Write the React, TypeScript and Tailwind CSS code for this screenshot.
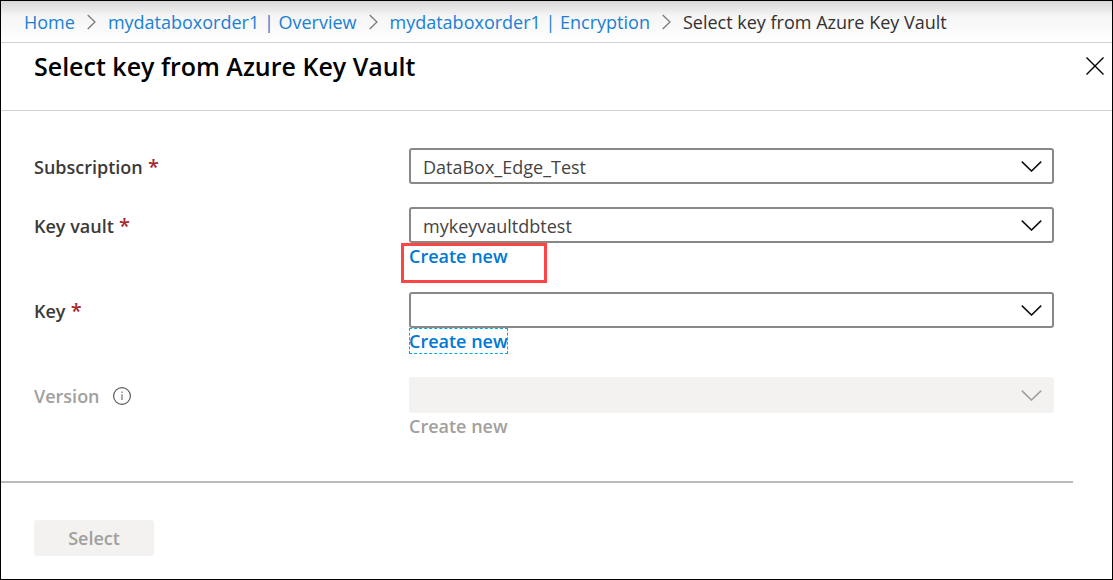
import { Fragment, type ReactNode } from "react";

const crumbs = ["Home", "mydataboxorder1 | Overview", "mydataboxorder1 | Encryption"];

function CrumbSeparator() {
  return (
    <svg className="mx-3 h-4 w-[9px] shrink-0" viewBox="0 0 9 16" fill="none" stroke="#767676" strokeWidth="1.2" aria-hidden="true">
      <path d="M0.7 1 L8 8 L0.7 15" />
    </svg>
  );
}

function Required() {
  return <span className="text-xl leading-none text-[#a4262c]"> *</span>;
}

function InfoIcon() {
  return (
    <svg className="h-5 w-5" viewBox="0 0 20 20" fill="none" aria-hidden="true">
      <circle cx="10" cy="10" r="8.4" stroke="#605e5c" strokeWidth="1.2" />
      <path d="M10 8.3 V14" stroke="#8a8886" strokeWidth="1.4" />
      <path d="M10 5.6 V7" stroke="#8a8886" strokeWidth="1.4" />
    </svg>
  );
}

type FieldProps = {
  id: string;
  label: ReactNode;
  value?: string;
  disabled?: boolean;
  children?: ReactNode;
};

function Field({ id, label, value = "", disabled = false, children }: FieldProps) {
  return (
    <div className="flex">
      <div className={`flex h-9 w-[375px] shrink-0 items-center pt-px ${disabled ? "text-[#a19f9d]" : "text-[#3b3a39]"}`}>
        {label}
      </div>
      <div className="min-w-0 flex-1">
        <div className="grid items-center">
          <select
            id={id}
            disabled={disabled}
            defaultValue={value}
            className="col-start-1 row-start-1 h-9 w-full appearance-none rounded-[3px] border-2 border-[#8a8886] bg-white pt-px pr-12 pl-3 text-lg font-normal text-[#454341] opacity-100 disabled:border-[#f3f2f1] disabled:bg-[#f3f2f1]"
          >
            <option value={value}>{value}</option>
          </select>
          <svg
            className={`pointer-events-none col-start-1 row-start-1 mr-3 h-3 w-[21px] justify-self-end ${disabled ? "text-[#a19f9d]" : "text-[#111111]"}`}
            viewBox="0 0 21 12"
            fill="none"
            stroke="currentColor"
            strokeWidth="1.6"
            aria-hidden="true"
          >
            <path d="M0.8 1.6 L10.5 11 L20.2 1.6" />
          </svg>
        </div>
        {children}
      </div>
    </div>
  );
}

export default function App() {
  return (
    <div className="min-h-screen border border-black bg-white font-['Open_Sans','Noto_Sans',sans-serif] text-lg font-semibold text-[#323130]">
      <nav
        aria-label="Breadcrumb"
        className="flex h-[42px] items-center border-b border-[#d2d0ce] bg-linear-to-b from-[#d8d6d8] via-[#f5f5f5] via-35% to-white pl-[23px] font-normal whitespace-nowrap"
      >
        {crumbs.map((crumb) => (
          <Fragment key={crumb}>
            <a href="#" className="text-[#1a80d4]">{crumb}</a>
            <CrumbSeparator />
          </Fragment>
        ))}
        <span aria-current="page">Select key from Azure Key Vault</span>
      </nav>

      <header className="flex h-[68px] items-start justify-between border-b border-[#d2d0ce] pt-[6px] pr-2 pl-[33px]">
        <h1 className="text-[25px] leading-[34px] font-semibold text-black">Select key from Azure Key Vault</h1>
        <button type="button" aria-label="Close" className="mt-2">
          <svg className="h-[18px] w-[18px]" viewBox="0 0 18 18" fill="none" stroke="#000" strokeWidth="1.4" aria-hidden="true">
            <path d="M0.5 0.5 L17.5 17.5 M17.5 0.5 L0.5 17.5" />
          </svg>
        </button>
      </header>

      <form>
        <div className="flex flex-col gap-[23px] pt-[37px] pr-[58px] pb-[42px] pl-[33px]">
          <Field id="subscription" value="DataBox_Edge_Test" label={<label htmlFor="subscription">Subscription<Required /></label>} />
          <Field id="key-vault" value="mykeyvaultdbtest" label={<label htmlFor="key-vault">Key vault<Required /></label>}>
            <div className="relative flex">
              <a href="#" className="leading-[26px] text-[#0078d4]">Create new</a>
              <span className="pointer-events-none absolute top-0 -left-2 h-10 w-[146px] border-3 border-[#fe4444]" />
            </div>
          </Field>
          <Field id="key" label={<label htmlFor="key">Key<Required /></label>}>
            <div className="flex">
              <a href="#" className="leading-[26px] text-[#0078d4] outline-1 -outline-offset-1 outline-[#00abec] outline-dashed">Create new</a>
            </div>
          </Field>
          <Field
            id="version"
            disabled
            label={
              <>
                <label htmlFor="version">Version</label>
                <button type="button" aria-label="About version" className="ml-3"><InfoIcon /></button>
              </>
            }
          >
            <div className="flex">
              <button type="button" disabled className="leading-[26px] text-[#a19f9d]">Create new</button>
            </div>
          </Field>
        </div>
        <footer className="pb-[23px]">
          <hr className="mr-[39px] border-t-2 border-[#bababa]" />
          <button type="submit" disabled className="mt-[37px] ml-[33px] h-9 w-30 rounded-[3px] bg-[#f3f2f1] text-[#a19f9d]">
            Select
          </button>
        </footer>
      </form>
    </div>
  );
}
